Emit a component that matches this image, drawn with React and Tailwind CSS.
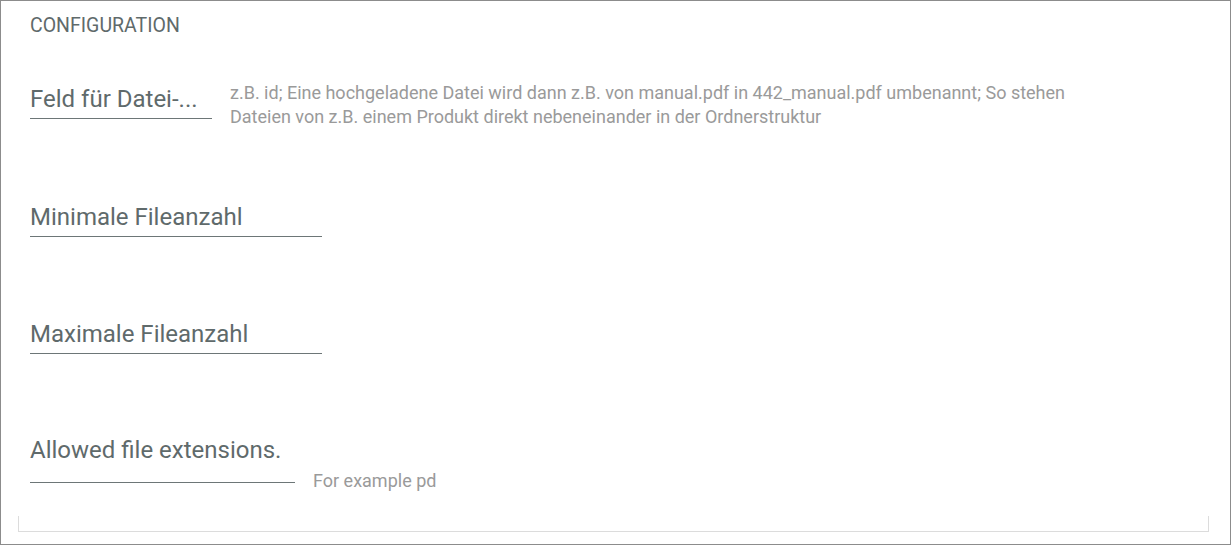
export default function App() {
  return (
    <div className="w-[1231px] h-[545px] border border-[#8c8c8c] bg-white flex flex-col font-['Roboto',sans-serif] overflow-hidden">
      <div className="pl-[29px] pt-[13px] text-[19.5px] leading-[24px] text-[#5f6a6b]">CONFIGURATION</div>

      {/* Feld für Datei-Prefix */}
      <div className="flex items-start gap-[18px] pl-[29px] mt-[40px]">
        <div className="mt-[7px] w-[182px] border-b border-[#6d7677] pb-[5px] text-[24px] leading-[28px] text-[#5f6a6b] whitespace-nowrap">
          Feld für Datei-...
        </div>
        <div className="mt-[3px] w-[850px] text-[18px] leading-[24px] text-[#9a9a9a]">
          z.B. id; Eine hochgeladene Datei wird dann z.B. von manual.pdf in 442_manual.pdf umbenannt; So stehen Dateien von z.B. einem Produkt direkt nebeneinander in der Ordnerstruktur
        </div>
      </div>

      <div className="pl-[29px] mt-[74px]">
        <div className="w-[292px] border-b border-[#6d7677] pb-[5px] text-[24px] leading-[28px] text-[#5f6a6b]">
          Minimale Fileanzahl
        </div>
      </div>

      <div className="pl-[29px] mt-[83px]">
        <div className="w-[292px] border-b border-[#6d7677] pb-[5px] text-[24px] leading-[28px] text-[#5f6a6b]">
          Maximale Fileanzahl
        </div>
      </div>

      <div className="flex items-start gap-[18px] pl-[29px] mt-[82px]">
        <div className="w-[265px] border-b border-[#6d7677] pb-[18px] text-[24px] leading-[28px] text-[#5f6a6b] whitespace-nowrap">
          Allowed file extensions.
        </div>
        <div className="mt-[33px] text-[18px] leading-[24px] text-[#9a9a9a]">For example pd</div>
      </div>

      <div className="ml-[17px] mt-[23px] w-[1191px] h-[16px] border-x border-b border-[#dcdcdc]" />
    </div>
  )
}
